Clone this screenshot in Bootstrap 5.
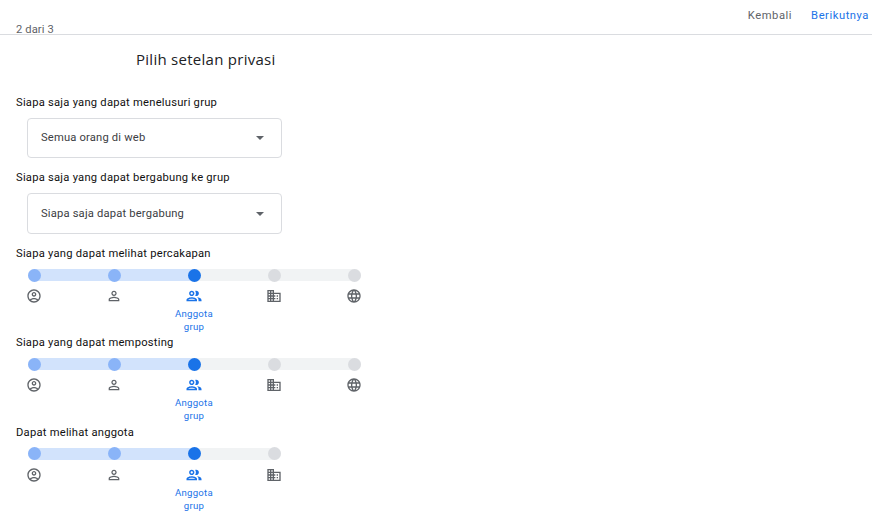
<!DOCTYPE html>
<html lang="id">
<head>
<meta charset="utf-8">
<title>Pilih setelan privasi</title>
<link href="https://cdn.jsdelivr.net/npm/bootstrap@5.3.0/dist/css/bootstrap.min.css" rel="stylesheet">
<style>
html,body{height:513px;overflow:hidden}
body{font-family:Roboto,"Liberation Sans",sans-serif;color:#202124;font-size:11.2px;background:#fff}
.topbar{height:35px;border-bottom:1px solid #dadce0;padding-left:16px;padding-right:3px}
.stepcount{font-size:11.2px;line-height:14px;color:#5f6368;letter-spacing:.1px;margin-bottom:-3px}
.topbtn{font-size:11.2px;font-weight:400;letter-spacing:.55px;line-height:14px;padding:0;border:0;background:none;margin-bottom:11px}
.topbtn-back{color:#5f6368;margin-right:19px}
.topbtn-next{color:#1a73e8}
.pagebody{padding-left:16px}
.pagetitle{font-family:"Open Sans",Roboto,sans-serif;font-size:15px;font-weight:400;line-height:20px;letter-spacing:.27px;margin:14px 0 27px 120px;color:#202124}
.fieldlabel{font-size:11.2px;font-weight:400;line-height:14px;letter-spacing:.24px;color:#111;margin:0}
.ddbox{width:255px;margin:8px 0 13px 11px;border:1px solid #dadce0;border-radius:4px;padding:0 13px;font-size:11.2px;letter-spacing:.18px;color:#3c4043}
.ddbox-a{height:40px}
.ddbox-b{height:41px;padding-top:1px}
.ddcaret{width:0;height:0;border-left:4.5px solid transparent;border-right:4.5px solid transparent;border-top:4.5px solid #5f6368;margin-right:4.5px}
.privslider{margin:8px 0 0 12px}
.privtrack{height:12px;border-radius:6px;background:linear-gradient(90deg,#d2e3fc 166px,#f1f3f4 166px)}
.privtrack-5{width:333px}
.privtrack-4{width:253px}
.stopdot{width:13px;height:13px;border-radius:50%;background:#dadce0;flex:none}
.stopdot-on{background:#8ab4f8}
.stopdot-cur{background:#1a73e8}
.stopcols{margin-left:-34px;margin-top:7px;height:48.4px}
.stopcol{width:80px;flex:none;text-align:center;color:#5f6368}
.stopcol svg{display:block;margin:0 auto;width:16px;height:16px;fill:currentColor}
.stopcol-cur{color:#1a73e8}
.stopcol-cur svg{width:18px;height:18px;margin-top:-1px;margin-bottom:-1px}
.stoptext{font-size:9.6px;line-height:13px;letter-spacing:.25px;margin-top:3px}
</style>
</head>
<body>
<svg width="0" height="0" class="position-absolute">
<defs>
<symbol id="i-self" viewBox="0 0 24 24"><path d="M12 2C6.48 2 2 6.48 2 12s4.48 10 10 10 10-4.48 10-10S17.52 2 12 2zM7.35 18.5C8.66 17.56 10.26 17 12 17s3.34.56 4.65 1.5c-1.31.94-2.91 1.5-4.65 1.5s-3.34-.56-4.65-1.5zm10.79-1.38C16.45 15.8 14.32 15 12 15s-4.45.8-6.14 2.12C4.7 15.73 4 13.95 4 12c0-4.42 3.58-8 8-8s8 3.58 8 8c0 1.95-.7 3.73-1.86 5.12z"/><path d="M12 6c-1.93 0-3.5 1.57-3.5 3.5S10.07 13 12 13s3.5-1.57 3.5-3.5S13.93 6 12 6zm0 5c-.83 0-1.5-.67-1.5-1.5S11.17 8 12 8s1.5.67 1.5 1.5S12.83 11 12 11z"/></symbol>
<symbol id="i-person" viewBox="0 0 24 24"><path d="M12 5.9c1.16 0 2.1.94 2.1 2.1s-.94 2.1-2.1 2.1S9.9 9.16 9.9 8s.94-2.1 2.1-2.1m0 9c2.97 0 6.1 1.46 6.1 2.1v1.1H5.9V17c0-.64 3.13-2.1 6.1-2.1M12 4C9.79 4 8 5.79 8 8s1.79 4 4 4 4-1.79 4-4-1.79-4-4-4zm0 9c-2.67 0-8 1.34-8 4v3h16v-3c0-2.66-5.33-4-8-4z"/></symbol>
<symbol id="i-group" viewBox="0 0 24 24"><path d="M9 13.75c-2.34 0-7 1.17-7 3.5V19h14v-1.75c0-2.33-4.66-3.5-7-3.5zM4.34 17c.84-.58 2.87-1.25 4.66-1.25s3.82.67 4.66 1.25H4.34zM9 12c1.93 0 3.5-1.57 3.5-3.5S10.93 5 9 5 5.5 6.57 5.5 8.5 7.07 12 9 12zm0-5c.83 0 1.5.67 1.5 1.5S9.83 10 9 10s-1.5-.67-1.5-1.5S8.17 7 9 7zm7.04 6.81c1.16.84 1.96 1.96 1.96 3.44V19h4v-1.75c0-2.02-3.5-3.17-5.96-3.44zM15 12c1.93 0 3.5-1.57 3.5-3.5S16.93 5 15 5c-.54 0-1.04.13-1.5.35.63.89 1 1.98 1 3.15s-.37 2.26-1 3.15c.46.22.96.35 1.5.35z"/></symbol>
<symbol id="i-domain" viewBox="0 0 24 24"><path d="M12 7V3H2v18h20V7H12zM6 19H4v-2h2v2zm0-4H4v-2h2v2zm0-4H4V9h2v2zm0-4H4V5h2v2zm4 12H8v-2h2v2zm0-4H8v-2h2v2zm0-4H8V9h2v2zm0-4H8V5h2v2zm10 12h-8v-2h2v-2h-2v-2h2v-2h-2V9h8v10zm-2-8h-2v2h2v-2zm0 4h-2v2h2v-2z"/></symbol>
<symbol id="i-web" viewBox="0 0 24 24"><path d="M11.99 2C6.47 2 2 6.48 2 12s4.47 10 9.99 10C17.52 22 22 17.52 22 12S17.52 2 11.99 2zm6.93 6h-2.95c-.32-1.25-.78-2.45-1.38-3.56 1.84.63 3.37 1.91 4.33 3.56zM12 4.04c.83 1.2 1.48 2.53 1.91 3.96h-3.82c.43-1.43 1.08-2.76 1.91-3.96zM4.26 14C4.1 13.36 4 12.69 4 12s.1-1.36.26-2h3.38c-.08.66-.14 1.32-.14 2 0 .68.06 1.34.14 2H4.26zm.82 2h2.95c.32 1.25.78 2.45 1.38 3.56-1.84-.63-3.37-1.9-4.33-3.56zm2.95-8H5.08c.96-1.66 2.49-2.93 4.33-3.56C8.81 5.55 8.35 6.75 8.03 8zM12 19.96c-.83-1.2-1.48-2.53-1.91-3.96h3.82c-.43 1.43-1.08 2.76-1.91 3.96zM14.34 14H9.66c-.09-.66-.16-1.32-.16-2 0-.68.07-1.35.16-2h4.68c.09.65.16 1.32.16 2 0 .68-.07 1.34-.16 2zm.25 5.56c.6-1.11 1.06-2.31 1.38-3.56h2.95c-.96 1.65-2.49 2.93-4.33 3.56zM16.36 14c.08-.66.14-1.32.14-2 0-.68-.06-1.34-.14-2h3.38c.16.64.26 1.31.26 2s-.1 1.36-.26 2h-3.38z"/></symbol>
</defs>
</svg>

<header class="topbar d-flex justify-content-between align-items-end">
  <div class="stepcount">2 dari 3</div>
  <div class="d-flex">
    <button type="button" class="topbtn topbtn-back">Kembali</button>
    <button type="button" class="topbtn topbtn-next">Berikutnya</button>
  </div>
</header>

<main class="pagebody">
  <h1 class="pagetitle">Pilih setelan privasi</h1>

  <p class="fieldlabel">Siapa saja yang dapat menelusuri grup</p>
  <div class="ddbox ddbox-a d-flex align-items-center justify-content-between"><span>Semua orang di web</span><span class="ddcaret"></span></div>

  <p class="fieldlabel">Siapa saja yang dapat bergabung ke grup</p>
  <div class="ddbox ddbox-b d-flex align-items-center justify-content-between"><span>Siapa saja dapat bergabung</span><span class="ddcaret"></span></div>

  <p class="fieldlabel">Siapa yang dapat melihat percakapan</p>
  <div class="privslider">
    <div class="privtrack privtrack-5 d-flex justify-content-between align-items-center">
      <span class="stopdot stopdot-on"></span><span class="stopdot stopdot-on"></span><span class="stopdot stopdot-cur"></span><span class="stopdot"></span><span class="stopdot"></span>
    </div>
    <div class="stopcols d-flex">
      <div class="stopcol"><svg><use href="#i-self"/></svg></div>
      <div class="stopcol"><svg><use href="#i-person"/></svg></div>
      <div class="stopcol stopcol-cur"><svg><use href="#i-group"/></svg><div class="stoptext">Anggota<br>grup</div></div>
      <div class="stopcol"><svg><use href="#i-domain"/></svg></div>
      <div class="stopcol"><svg><use href="#i-web"/></svg></div>
    </div>
  </div>

  <p class="fieldlabel">Siapa yang dapat memposting</p>
  <div class="privslider">
    <div class="privtrack privtrack-5 d-flex justify-content-between align-items-center">
      <span class="stopdot stopdot-on"></span><span class="stopdot stopdot-on"></span><span class="stopdot stopdot-cur"></span><span class="stopdot"></span><span class="stopdot"></span>
    </div>
    <div class="stopcols d-flex">
      <div class="stopcol"><svg><use href="#i-self"/></svg></div>
      <div class="stopcol"><svg><use href="#i-person"/></svg></div>
      <div class="stopcol stopcol-cur"><svg><use href="#i-group"/></svg><div class="stoptext">Anggota<br>grup</div></div>
      <div class="stopcol"><svg><use href="#i-domain"/></svg></div>
      <div class="stopcol"><svg><use href="#i-web"/></svg></div>
    </div>
  </div>

  <p class="fieldlabel">Dapat melihat anggota</p>
  <div class="privslider">
    <div class="privtrack privtrack-4 d-flex justify-content-between align-items-center">
      <span class="stopdot stopdot-on"></span><span class="stopdot stopdot-on"></span><span class="stopdot stopdot-cur"></span><span class="stopdot"></span>
    </div>
    <div class="stopcols d-flex">
      <div class="stopcol"><svg><use href="#i-self"/></svg></div>
      <div class="stopcol"><svg><use href="#i-person"/></svg></div>
      <div class="stopcol stopcol-cur"><svg><use href="#i-group"/></svg><div class="stoptext">Anggota<br>grup</div></div>
      <div class="stopcol"><svg><use href="#i-domain"/></svg></div>
    </div>
  </div>
</main>
<script src="https://cdn.jsdelivr.net/npm/bootstrap@5.3.0/dist/js/bootstrap.bundle.min.js"></script>
</body>
</html>
